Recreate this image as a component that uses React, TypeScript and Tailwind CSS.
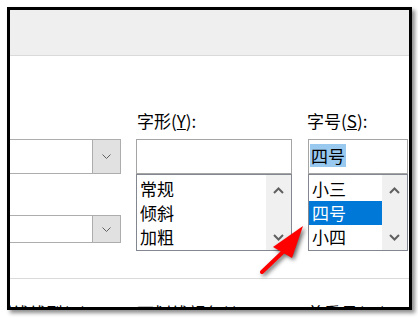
import React from "react";

const Up = () => (
  <svg width="11" height="7" viewBox="0 0 11 7">
    <polyline points="1,6 5.5,1.5 10,6" fill="none" stroke="#606060" strokeWidth="2" />
  </svg>
);

const Down = () => (
  <svg width="11" height="7" viewBox="0 0 11 7">
    <polyline points="1,1 5.5,5.5 10,1" fill="none" stroke="#606060" strokeWidth="2" />
  </svg>
);

function ComboBox({ height }: { height: string }) {
  return (
    <div className={`${height} w-[111px] border border-l-0 border-[#adadad] bg-white flex justify-end`}>
      <div className="w-[28px] h-full bg-[#e1e1e1] border-l border-[#adadad] flex items-center justify-center">
        <svg width="9" height="5" viewBox="0 0 9 5">
          <polyline points="0.5,0.5 4.5,4.5 8.5,0.5" fill="none" stroke="#606060" strokeWidth="1" />
        </svg>
      </div>
    </div>
  );
}

function ListBox({ items, selected }: { items: string[]; selected?: number }) {
  return (
    <div className="h-[77px] border border-[#828790] bg-white flex">
      <div className="flex-1 pt-[2px]">
        {items.map((item, i) => (
          <div
            key={item}
            className={`h-[24px] leading-[24px] pl-[3px] ${
              i === selected ? "bg-[#0078d7] text-white" : "text-black"
            }`}
          >
            {item}
          </div>
        ))}
      </div>
      <div className="w-[25px] bg-[#f0f0f0] flex flex-col items-center justify-between pt-[12px] pb-[9px]">
        <Up />
        <Down />
      </div>
    </div>
  );
}

export default function App() {
  return (
    <div className="relative w-[418px] h-[318px] bg-white pt-[7px] pl-[7px] font-['Noto_Sans_CJK_SC','Noto_Sans',sans-serif] text-[17px] text-black">
      <div className="w-[405px] h-[303px] border-[3px] border-black overflow-hidden bg-white shadow-[3px_3px_4px_rgba(0,0,0,0.45)]">
        {/* dialog top bar */}
        <div className="h-[46px] bg-[#efefef] border-b border-[#dadada]" />

        <div className="flex items-start">
          {/* font name combos */}
          <div className="mt-[83px] flex flex-col gap-[41px]">
            <ComboBox height="h-[35px]" />
            <ComboBox height="h-[28px]" />
          </div>

          {/* style */}
          <div className="ml-[15px] w-[156px] pt-[53px]">
            <div className="h-[24px] leading-[24px] mb-[6px] pl-[1px] whitespace-nowrap">
              字形(<span className="underline">Y</span>):
            </div>
            <div className="h-[35px] border border-[#a5a5a5] bg-white" />
            <ListBox items={["常规", "倾斜", "加粗"]} />
          </div>

          {/* size */}
          <div className="ml-[16px] w-[100px] pt-[53px]">
            <div className="h-[24px] leading-[24px] mb-[6px] -ml-[1px] whitespace-nowrap">
              字号(<span className="underline">S</span>):
            </div>
            <div className="h-[35px] border border-[#a5a5a5] bg-white pt-[3px] pl-[1px]">
              <span className="inline-block bg-[#99c9ef] leading-[23px] px-[1px]">四号</span>
            </div>
            <ListBox items={["小三", "四号", "小四"]} selected={1} />
          </div>
        </div>

        <div className="mt-[27px] border-t border-[#dadada]" />

        <div className="mt-[22px] flex whitespace-nowrap leading-[24px]">
          <div className="w-[111px] overflow-hidden">
            <div className="-ml-[32px]">下划线线型(U):</div>
          </div>
          <div className="ml-[16px] w-[156px]">下划线颜色(I):</div>
          <div className="ml-[14px]">着重号(·):</div>
        </div>
      </div>

      {/* red annotation arrow */}
      <svg
        className="absolute left-0 top-0 pointer-events-none drop-shadow-[2px_2px_2px_rgba(0,0,0,0.6)]"
        width="418"
        height="318"
        viewBox="0 0 418 318"
      >
        <line x1="262" y1="272" x2="284" y2="251" stroke="#ff0000" strokeWidth="4" strokeLinecap="round" />
        <polygon points="303,226 273,247 292,258" fill="#ff0000" />
      </svg>
    </div>
  );
}
